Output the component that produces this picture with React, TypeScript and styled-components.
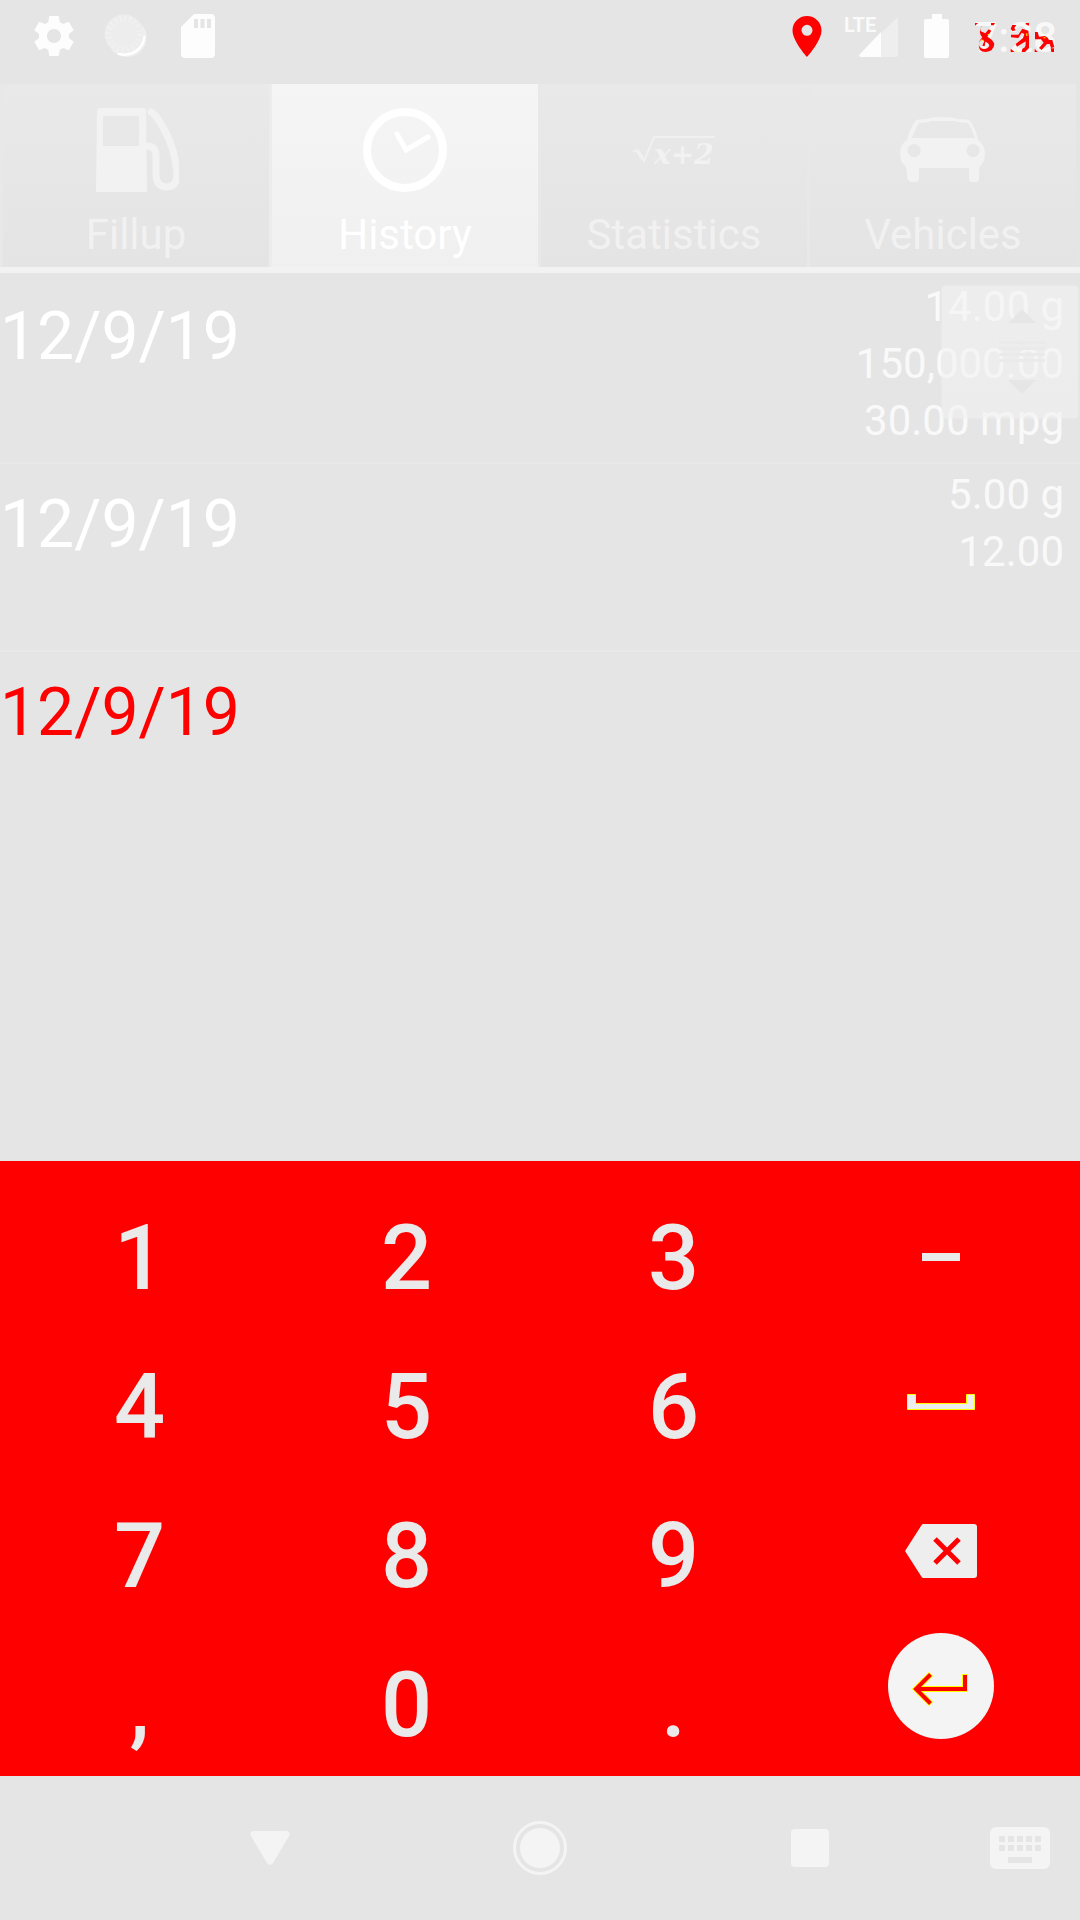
import React from 'react';
import styled, { createGlobalStyle } from 'styled-components';

const Global = createGlobalStyle`
  * { box-sizing: border-box; }
  body { margin: 0; background: #e5e5e5; font-family: Roboto, "Liberation Sans", sans-serif; }
  button { border: 0; padding: 0; margin: 0; background: none; font: inherit; color: inherit; }
  svg { display: block; flex: none; }
`;

const Screen = styled.div`
  min-height: 100vh;
  display: flex;
  flex-direction: column;
  background: #e5e5e5;
`;

const StatusBar = styled.header`
  height: 84px;
  flex: none;
  display: flex;
  justify-content: space-between;
  align-items: flex-start;
  padding: 12px 23px 0 30px;
`;

const StatusGroup = styled.div`
  display: flex;
  align-items: flex-start;
  gap: 24px;
`;

const Clock = styled.time`
  position: relative;
  padding-top: 2px;
  font-size: 42px;
  line-height: 48px;
  font-weight: 500;
  color: #f8f8f8;
`;

const ClockMarks = styled.svg`
  position: absolute;
  left: 0;
  top: 0;
`;

const Tabs = styled.nav`
  display: grid;
  grid-template-columns: repeat(4, 1fr);
  height: 189px;
  flex: none;
  padding-right: 4px;
  border-bottom: 6px solid #f2f2f2;
`;

const Tab = styled.button<{ $active?: boolean }>`
  display: flex;
  flex-direction: column;
  align-items: center;
  padding-top: 22px;
  gap: 18px;
  font-size: 42px;
  line-height: 50px;
  color: ${(p) => (p.$active ? '#ffffff' : '#f1f1f1')};
  background: ${(p) =>
    p.$active ? 'linear-gradient(#f5f5f5, #f0f0f0)' : 'linear-gradient(#e9e9e9, #e4e4e4)'};
  border-left: 3px solid ${(p) => (p.$active ? '#ececec' : '#e8e8e8')};
`;

const History = styled.main`
  position: relative;
  flex: 1;
`;

const Entries = styled.ul`
  list-style: none;
  margin: 0;
  padding: 3px 0 0;
`;

const Entry = styled.li`
  display: flex;
  justify-content: space-between;
  min-height: 188px;
  padding: 2px 16px 0 0;
  &:not(:last-child) { border-bottom: 2px solid #e8e8e8; }
`;

const EntryDate = styled.time<{ $alert?: boolean }>`
  font-size: 66px;
  line-height: 78px;
  padding-top: 20px;
  color: ${(p) => (p.$alert ? '#ff0000' : '#ffffff')};
`;

const Figures = styled.div`
  display: flex;
  flex-direction: column;
  align-items: flex-end;
  font-size: 42px;
  line-height: 57px;
  color: #f9f9f9;
`;

const ScrollThumb = styled.div`
  position: absolute;
  top: 13px;
  right: 2px;
  width: 136px;
  height: 132px;
  border-radius: 3px;
  background: linear-gradient(rgba(243, 243, 243, 0.6), rgba(241, 241, 241, 0.6));
  box-shadow: 0 0 2px #eeeeee;
`;

const Keypad = styled.section`
  display: grid;
  grid-template-columns: repeat(4, 1fr);
  grid-template-rows: repeat(4, 1fr);
  height: 615px;
  flex: none;
  padding: 20px 6px 0;
  background: #ff0000;
`;

const Key = styled.button<{ $drop?: number; $lift?: number }>`
  display: flex;
  align-items: center;
  justify-content: center;
  padding-top: ${(p) => p.$drop ?? 0}px;
  padding-bottom: ${(p) => p.$lift ?? 0}px;
  font-size: 90px;
  line-height: 112px;
  font-weight: 500;
  color: #eaeaea;
`;

const SystemNav = styled.footer`
  display: grid;
  grid-template-columns: 1fr 2fr 2fr 2fr 1fr;
  height: 144px;
  flex: none;
`;

const NavButton = styled.button<{ $shift?: boolean }>`
  display: flex;
  align-items: center;
  justify-content: center;
  padding-left: ${(p) => (p.$shift ? 15 : 0)}px;
`;

const Gear = () => (
  <svg width="48" height="48" viewBox="0 0 24 24" fill="#fdfdfd">
    <path d="M19.43 12.98c.04-.32.07-.64.07-.98s-.03-.66-.07-.98l2.11-1.65c.19-.15.24-.42.12-.64l-2-3.46c-.12-.22-.39-.3-.61-.22l-2.49 1c-.52-.4-1.08-.73-1.69-.98l-.38-2.65C14.46 2.18 14.25 2 14 2h-4c-.25 0-.46.18-.49.42l-.38 2.65c-.61.25-1.17.59-1.69.98l-2.49-1c-.23-.09-.49 0-.61.22l-2 3.46c-.13.22-.07.49.12.64l2.11 1.65c-.04.32-.07.65-.07.98s.03.66.07.98l-2.11 1.65c-.19.15-.24.42-.12.64l2 3.46c.12.22.39.3.61.22l2.49-1c.52.4 1.08.73 1.69.98l.38 2.65c.03.24.24.42.49.42h4c.25 0 .46-.18.49-.42l.38-2.65c.61-.25 1.17-.59 1.69-.98l2.49 1c.23.09.49 0 .61-.22l2-3.46c.12-.22.07-.49-.12-.64l-2.11-1.65zM12 15.5c-1.93 0-3.5-1.57-3.5-3.5s1.57-3.5 3.5-3.5 3.5 1.57 3.5 3.5-1.57 3.5-3.5 3.5z" />
  </svg>
);

const Dial = () => (
  <svg width="48" height="48" viewBox="0 0 48 48">
    <circle cx="25" cy="25.500" r="19.500" fill="#f0f0f0" />
    <path d="M42 24A19 19 0 0 1 16 41" fill="none" stroke="#ffffff" strokeWidth="3" />
    <circle cx="22" cy="22" r="19.500" fill="#ededed" />
    <circle cx="22" cy="22" r="15.500" fill="none" stroke="#f1f1f1" strokeWidth="6" strokeDasharray="1.600 3.270" />
  </svg>
);

const SdCard = () => (
  <svg width="48" height="48" viewBox="0 0 48 48" fill="#fdfdfd">
    <path d="M20 2h17q4 0 4 4v36q0 4-4 4H11q-4 0-4-4V15zM20 7v9h4V7zM26.500 7v9h4V7zM33 7v9h4V7z" fillRule="evenodd" />
  </svg>
);

const Pin = () => (
  <svg width="30" height="48" viewBox="0 0 30 48">
    <path fill="#ff0000" fillRule="evenodd" d="M15 4C7 4 0.500 10.300 0.500 18.500 0.500 29 15 45 15 45S29.500 29 29.500 18.500C29.500 10.300 23 4 15 4zM15 12.800a5.500 5.500 0 1 1 0 11 5.500 5.500 0 0 1 0-11z" />
  </svg>
);

const Signal = () => (
  <svg width="54" height="48" viewBox="0 0 54 48" overflow="visible">
    <path d="M52 5v38q0 2-2 2H35V21z" fill="#eeeeee" />
    <path d="M35 20v25H15q-3 0-1-3z" fill="#fdfdfd" />
    <text x="-2" y="20" fontFamily="Roboto, sans-serif" fontSize="20" fontWeight="700" fill="#fafafa">
      LTE
    </text>
  </svg>
);

const Battery = () => (
  <svg width="26" height="48" viewBox="0 0 26 48">
    <path d="M8 2h10v5h5q2 0 2 2v35q0 2-2 2H2q-2 0-2-2V9q0-2 2-2h6z" fill="#fdfdfd" />
  </svg>
);

const Pump = () => (
  <svg width="86" height="86" viewBox="0 0 86 86">
    <path d="M4 5q0-3 3-3h43q3 0 3 3l1 81H3z M10 10v30h36V10z" fill="#f2f2f2" fillRule="evenodd" />
    <path d="M54 40q9 0 9 10v20q1 11 11 11t10-14Q82 40 68 18q-5-9-10-12" fill="none" stroke="#f2f2f2" strokeWidth="7" strokeLinecap="round" />
  </svg>
);

const ClockFace = () => (
  <svg width="86" height="86" viewBox="0 0 86 86" fill="none" stroke="#ffffff" strokeLinecap="round">
    <circle cx="43" cy="44" r="38" strokeWidth="8" />
    <path d="M35 28l9 16 22-13" strokeWidth="5" />
  </svg>
);

const Root = () => (
  <svg width="86" height="86" viewBox="0 0 86 86">
    <path d="M2 46l4-2 7 11L23 31h61" fill="none" stroke="#f0f0f0" strokeWidth="2" />
    <path d="M6 44l6 9" stroke="#f0f0f0" strokeWidth="4" />
    <text x="23" y="58" fontFamily="DejaVu Serif, serif" fontStyle="italic" fontWeight="700" fontSize="28" fill="#f2f2f2">x+2</text>
  </svg>
);

const Car = () => (
  <svg width="86" height="86" viewBox="0 0 86 86">
    <path
      d="M15 15q1-2 12-2 3-2 15-2t15 2q12 0 13 2 6 8 8 19 7 5 7 14 0 8-5 12-1 2-1 12 0 4-3 4h-4q-3 0-3-3V62H19v10q0 4-4 4h-2q-6 0-6-6 0-8-2-10-5-4-5-13 0-8 7-13 3-12 8-19z M19 17q-4 6-7 15h63q-3-9-7-15l-11-1-2-1H31l-2 1z M14 38a6.500 6.500 0 1 0 .1 0z M73 38a6.500 6.500 0 1 0 .1 0z"
      fill="#f2f2f2"
      fillRule="evenodd"
    />
  </svg>
);

const tabs = [
  { label: 'Fillup', icon: <Pump /> },
  { label: 'History', icon: <ClockFace />, active: true },
  { label: 'Statistics', icon: <Root /> },
  { label: 'Vehicles', icon: <Car /> },
];

const entries = [
  { date: '12/9/19', figures: ['14.00 g', '150,000.00', '30.00 mpg'] },
  { date: '12/9/19', figures: ['5.00 g', '12.00'] },
  { date: '12/9/19', figures: [], alert: true },
];

const Minus = () => (
  <svg width="38" height="8" viewBox="0 0 38 8"><path d="M0 0h38v8H0z" fill="#eaeaea" /></svg>
);

const Space = () => (
  <svg width="68" height="16" viewBox="0 0 68 16">
    <path d="M.5.5h8v9h51v-9h8v15H.5z" fill="#eeeeee" stroke="#ffff00" />
  </svg>
);

const Backspace = () => (
  <svg width="72" height="54" viewBox="0 0 72 54">
    <path d="M18 0h51q3 0 3 3v48q0 3-3 3H18q-1 0-2-2L0 27 16 2q1-2 2-2z" fill="#eeeeee" />
    <path d="M30 15l24 24M54 15L30 39" stroke="#ff0000" strokeWidth="5" />
  </svg>
);

const Enter = () => (
  <svg width="106" height="106" viewBox="0 0 106 106">
    <circle cx="53" cy="53" r="53" fill="#f4f4f4" />
    <path d="M77 41v15H29M43 41L28 56l15 15" fill="none" stroke="#ffff00" strokeWidth="6" />
    <path d="M77 42v14H28M42.500 41.500L28 56l14.500 14.500" fill="none" stroke="#ff0000" strokeWidth="4" />
  </svg>
);

type KeyInfo = { name: string; face: React.ReactNode; drop?: number; lift?: number };

const digit = (face: string, name = face): KeyInfo => ({ name, face, drop: 8 });

const keys: KeyInfo[] = [
  digit('1'), digit('2'), digit('3'), { name: 'Minus', face: <Minus />, drop: 4 },
  digit('4'), digit('5'), digit('6'), { name: 'Space', face: <Space />, lift: 4 },
  digit('7'), digit('8'), digit('9'), { name: 'Delete', face: <Backspace />, lift: 4 },
  digit(',', 'Comma'), digit('0'), digit('.', 'Period'), { name: 'Enter', face: <Enter />, lift: 32 },
];

export default function App() {
  return (
    <Screen>
      <Global />
      <StatusBar>
        <StatusGroup>
          <Gear />
          <Dial />
          <SdCard />
        </StatusGroup>
        <StatusGroup>
          <Pin />
          <Signal />
          <Battery />
          <Clock>
            7:28
            <ClockMarks width="82" height="48" viewBox="27 0 246 144" fill="#ff0000">
              <path d="M30 33h9l-9 8zM78 33h12l-4 7h-8zM40 42h9q-5 10-2 16l14 6 10-12 8 4-12 18q18 10 21 22-2 22-26 24-24 0-20-26 2-12 10-18-14-16-2-34zM48 82l-6 12q-1 16 15 17 13-1 16-10-1-8-12-12l-2 14-7-2 6-14z" fillRule="evenodd" />
              <path d="M142 39h12l-6 9 4 7-10 2-5-7zM182 33h10v8l-10-4zM138 68h22l12-18 18 6 2 18v34l-12 12h-10l2-10q10-2 10-14V88l-26 16-4-8 22-18 4-12-8-4-10 16-22-2zM137 110l12 10h-12z" />
              <path d="M210 60h8l4 14 18-2q10 4 12 12h10l6 22-10 2-4-12h-8l-16 18-8-6 14-16-8-10h-18zM209 110l9 10h-9zM257 109h10v11h-8z" />
              <path d="M68 66h6v3h-6zM50 83h5v3h-5zM150 116h5v3h-5zM184 64h3v8h-3zM236 76h5v3h-5z" fill="#ffff00" />
            </ClockMarks>
          </Clock>
        </StatusGroup>
      </StatusBar>
      <Tabs>
        {tabs.map((t) => (
          <Tab key={t.label} $active={t.active}>
            {t.icon}
            {t.label}
          </Tab>
        ))}
      </Tabs>
      <History>
        <Entries>
          {entries.map((e, i) => (
            <Entry key={i}>
              <EntryDate $alert={e.alert}>{e.date}</EntryDate>
              <Figures>
                {e.figures.map((f) => (
                  <span key={f}>{f}</span>
                ))}
              </Figures>
            </Entry>
          ))}
        </Entries>
        <ScrollThumb>
          <svg width="136" height="132" viewBox="0 0 136 132" fill="#e6e6e6">
            <path d="M80 23l14 14H66zM80 108l14-14H66z" />
            <path d="M57 55h46v3H57zM57 61h46v3H57zM57 67h46v3H57zM57 73h46v3H57z" fill="#eaeaea" />
          </svg>
        </ScrollThumb>
      </History>
      <Keypad>
        {keys.map((k) => (
          <Key key={k.name} aria-label={k.name} $drop={k.drop} $lift={k.lift}>
            {k.face}
          </Key>
        ))}
      </Keypad>
      <SystemNav>
        <span />
        <NavButton aria-label="Back">
          <svg width="40" height="36" viewBox="0 0 40 36">
            <path d="M3 1h34q4 1 2 5L23 33q-3 4-6 0L1 6Q-1 2 3 1z" fill="#f4f4f4" />
          </svg>
        </NavButton>
        <NavButton aria-label="Home">
          <svg width="54" height="54" viewBox="0 0 54 54">
            <circle cx="27" cy="27" r="25.500" fill="none" stroke="#f4f4f4" strokeWidth="3" />
            <circle cx="27" cy="27" r="20" fill="#f4f4f4" />
          </svg>
        </NavButton>
        <NavButton aria-label="Overview">
          <svg width="38" height="38" viewBox="0 0 38 38">
            <rect width="38" height="38" rx="4" fill="#f4f4f4" />
          </svg>
        </NavButton>
        <NavButton aria-label="Keyboard" $shift>
          <svg width="60" height="42" viewBox="0 0 60 42">
            <rect width="60" height="42" rx="6" fill="#f4f4f4" />
            <path d="M9 9h6v6H9zM18 9h6v6h-6zM27 9h6v6h-6zM36 9h6v6h-6zM45 9h6v6h-6zM9 18h6v6H9zM18 18h6v6h-6zM27 18h6v6h-6zM36 18h6v6h-6zM45 18h6v6h-6zM18 30h24v6H18z" fill="#e5e5e5" />
          </svg>
        </NavButton>
      </SystemNav>
    </Screen>
  );
}
